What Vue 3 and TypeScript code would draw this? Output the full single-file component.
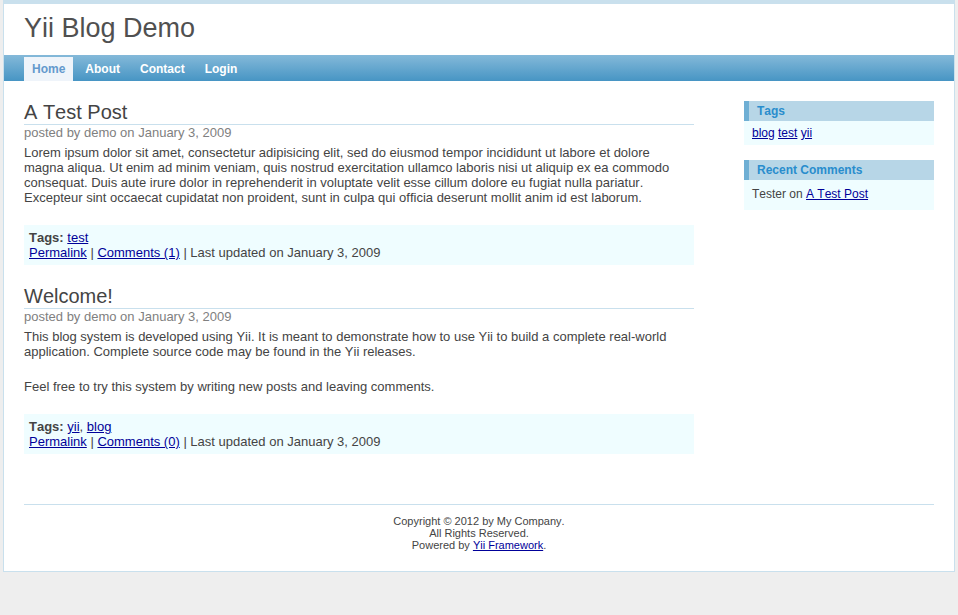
<script setup lang="ts">
interface Post { title: string; author: string; date: string; body: string[]; tags: string[]; comments: number }

const menu: string[] = ['Home', 'About', 'Contact', 'Login']
const active = 'Home'
const tagCloud: string[] = ['blog', 'test', 'yii']
const posts: Post[] = [
  {
    title: 'A Test Post',
    author: 'demo',
    date: 'January 3, 2009',
    body: [
      'Lorem ipsum dolor sit amet, consectetur adipisicing elit, sed do eiusmod tempor incididunt ut labore et dolore magna aliqua. Ut enim ad minim veniam, quis nostrud exercitation ullamco laboris nisi ut aliquip ex ea commodo consequat. Duis aute irure dolor in reprehenderit in voluptate velit esse cillum dolore eu fugiat nulla pariatur. Excepteur sint occaecat cupidatat non proident, sunt in culpa qui officia deserunt mollit anim id est laborum.',
    ],
    tags: ['test'],
    comments: 1,
  },
  {
    title: 'Welcome!',
    author: 'demo',
    date: 'January 3, 2009',
    body: [
      'This blog system is developed using Yii. It is meant to demonstrate how to use Yii to build a complete real-world application. Complete source code may be found in the Yii releases.',
      'Feel free to try this system by writing new posts and leaving comments.',
    ],
    tags: ['yii', 'blog'],
    comments: 0,
  },
]
</script>

<template>
  <div class="page">
    <header class="header"><h1 class="logo">Yii Blog Demo</h1></header>
    <nav class="menu">
      <a v-for="item in menu" :key="item" href="#" :class="{ active: item === active }">{{ item }}</a>
    </nav>
    <div class="columns">
      <main class="content">
        <article v-for="post in posts" :key="post.title" class="post">
          <h2 class="title">{{ post.title }}</h2>
          <div class="author">posted by {{ post.author }} on {{ post.date }}</div>
          <div class="body"><p v-for="(para, i) in post.body" :key="i">{{ para }}</p></div>
          <div class="meta">
            <div>
              <b>Tags:</b>{{ ' ' }}<template v-for="(tag, i) in post.tags" :key="tag"><template v-if="i">, </template><a href="#">{{ tag }}</a></template>
            </div>
            <div><a href="#">Permalink</a> | <a href="#">Comments ({{ post.comments }})</a> | Last updated on {{ post.date }}</div>
          </div>
        </article>
      </main>
      <aside class="sidebar">
        <section class="portlet">
          <h3>Tags</h3>
          <div class="box"><template v-for="tag in tagCloud" :key="tag"><a href="#">{{ tag }}</a>{{ ' ' }}</template></div>
        </section>
        <section class="portlet">
          <h3>Recent Comments</h3>
          <div class="box recent">Tester on <a href="#">A Test Post</a></div>
        </section>
      </aside>
    </div>
    <footer class="footer">
      Copyright © 2012 by My Company.<br>All Rights Reserved.<br>Powered by <a href="#">Yii Framework</a>.
    </footer>
  </div>
</template>

<style>
body {
  background: #eee;
}
</style>

<style scoped>
.page {
  box-sizing: border-box;
  margin: 0 3px;
  border: 1px solid #c9e0ed;
  border-top-width: 4px;
  background: #fff;
  color: #444;
  font: 13px/15px "Liberation Sans", Arial, sans-serif;
  font-kerning: none;
}
a {
  color: #009;
}
h1, h2, h3, p {
  margin: 0;
  font-weight: normal;
}
.logo {
  padding: 9px 20px 11px;
  color: #505050;
  font-size: 27px;
  line-height: 31px;
}
.menu {
  display: flex;
  gap: 4px;
  padding: 2px 20px 0;
  background: linear-gradient(#84b9d9, #4795c4);
}
.menu a {
  padding: 4px 8px;
  color: #fff;
  font-size: 12px;
  line-height: 16px;
  font-weight: bold;
  text-decoration: none;
}
.menu .active {
  background: #eff4fa;
  color: #6399cd;
}
.columns {
  display: flex;
  gap: 50px;
  padding: 20px 20px 50px;
}
.content {
  flex: 1;
  display: flex;
  flex-direction: column;
  gap: 20px;
}
.title {
  border-bottom: 1px solid #c9e0ed;
  font-size: 20px;
  line-height: 23px;
}
.author {
  margin-bottom: 5px;
  color: #808080;
}
.body {
  display: flex;
  flex-direction: column;
  gap: 20px;
  padding-right: 10px;
}
.meta {
  margin-top: 20px;
  padding: 5px;
  background: #effdff;
}
.sidebar {
  width: 190px;
}
.portlet {
  margin-bottom: 15px;
  font-size: 12px;
}
.portlet h3 {
  padding: 2px 8px;
  border-left: 5px solid #6fafd4;
  background: #b7d6e7;
  color: #298dcd;
  font-size: 12px;
  line-height: 16px;
  font-weight: bold;
}
.box {
  padding: 5px 8px 4px;
  background: #effdff;
}
.recent {
  padding: 7px 8px 8px;
}
.footer {
  margin: 0 20px;
  padding: 10px 0 20px;
  border-top: 1px solid #c9e0ed;
  font-size: 11px;
  line-height: 12px;
  text-align: center;
}
</style>
